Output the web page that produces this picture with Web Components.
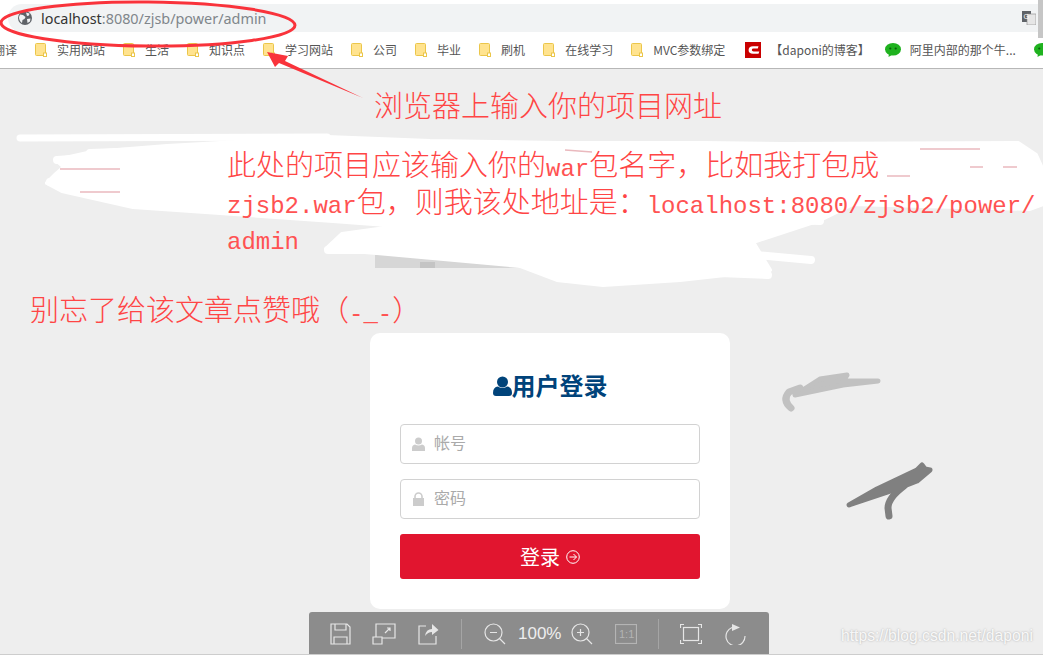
<!DOCTYPE html>
<html lang="zh">
<head>
<meta charset="utf-8">
<title>用户登录</title>
<style>
    html, body { margin: 0; height: 100%; overflow: hidden; background: #eeeeee; }
    body { font-family: "Noto Sans CJK SC", "Noto Sans", sans-serif; }
    body::after { content: ""; position: absolute; left: 0; top: 654px; width: 100%; height: 1px; background: #cdcdcd; }
</style>
</head>
<body>
<browser-bar url-host="localhost" url-rest=":8080/zjsb/power/admin">
    <book-mark kind="clip">翻译</book-mark>
    <book-mark>实用网站</book-mark>
    <book-mark>生活</book-mark>
    <book-mark>知识点</book-mark>
    <book-mark>学习网站</book-mark>
    <book-mark>公司</book-mark>
    <book-mark>毕业</book-mark>
    <book-mark>刷机</book-mark>
    <book-mark>在线学习</book-mark>
    <book-mark>MVC参数绑定</book-mark>
    <book-mark kind="csdn" style="margin-left:2px">【daponi的博客】</book-mark>
    <book-mark kind="wechat" style="margin-left:-3px">阿里内部的那个牛...</book-mark>
    <book-mark kind="wechat"></book-mark>
</browser-bar>
<login-page>
    <login-card heading="用户登录">
        <login-field icon="user">帐号</login-field>
        <login-field icon="lock">密码</login-field>
    </login-card>
</login-page>
<scribble-layer></scribble-layer>
<note-text style="left:374px;top:86px"><div>浏览器上输入你的项目网址</div></note-text>
<note-text style="left:227px;top:145px">
    <div>此处的项目应该输入你的<b>war</b>包名字，比如我打包成</div>
    <div><b>zjsb2.war</b>包，则我该处地址是：<b>localhost:8080/zjsb2/power/</b></div>
    <div><b>admin</b></div>
</note-text>
<note-text style="left:30px;top:290px"><div>别忘了给该文章点赞哦（<b>-_-</b>）</div></note-text>
<viewer-toolbar></viewer-toolbar>
<water-mark>https://blog.csdn.net/daponi</water-mark>

<script>
// bookmark bar icons, picked by the kind attribute
const BOOKMARK_ICONS = {
    folder: `<svg width="12" height="14" viewBox="0 0 12 14"><path d="M.5 1.500q0-1 1-1h8q1 0 1 1v11h-9q-1 0-1-1z" fill="#ffe38f" stroke="#ebc64a"/><rect x="8.500" y="10" width="3" height="3.500" fill="#fff" stroke="#ebc64a"/></svg>`,
    csdn: `<svg width="16" height="16" viewBox="0 0 16 16"><rect width="16" height="16" fill="#c90000"/><path d="M13.500 4.200H8Q3.600 4.200 3.600 8T8 11.800h5.500l.8-2.400H8.600Q6.800 9.400 6.800 8T8.600 6.600H12.800z" fill="#fff"/></svg>`,
    wechat: `<svg width="16" height="14" viewBox="0 0 16 14"><ellipse cx="8" cy="6.300" rx="8" ry="6.300" fill="#1fb21f"/><path d="M4 10l-.5 4 4-2.500z" fill="#1fb21f"/><circle cx="5.300" cy="5.500" r="1.100" fill="#0b5f0b"/><circle cx="10.700" cy="5.500" r="1.100" fill="#0b5f0b"/></svg>`
};

class BrowserBar extends HTMLElement {
    constructor() {
        super();
        this.attachShadow({ mode: 'open' });
    }

    connectedCallback() {
        this.shadowRoot.innerHTML = `
            <style>
                :host { display: block; height: 69px; box-sizing: border-box; background: #fff; border-bottom: 1px solid #b7b7b7; padding-top: 4px; overflow: hidden; }
                .address { display: flex; align-items: center; gap: 9px; height: 28px; margin-left: 8px; padding: 0 7px 0 10px; background: #f1f3f4; border-radius: 14px 0 0 14px; font: 14.400px "Noto Sans", sans-serif; color: #80868b; }
                .host { color: #333; }
                .url { flex: 1; white-space: nowrap; }
                .marks { display: flex; align-items: center; gap: 18px; height: 36px; margin-left: -7px; white-space: nowrap; }
            </style>
            <div class="address">
                <svg width="14" height="14" viewBox="0 0 14 14"><circle cx="7" cy="7" r="7" fill="#5f6368"/><path d="M2 3.500l3 .5 2.500 2-1 2-2 1-.5 3Q1 10 1 6zM8 1.500l3.500 1-.5 2-2 .5zM9 8l3.500-.5-.5 3-2.500 1.500z" fill="#f1f3f4"/></svg>
                <span class="url"><span class="host">${this.getAttribute('url-host')}</span>${this.getAttribute('url-rest')}</span>
                <svg width="14" height="14" viewBox="0 0 14 14"><rect width="9" height="11" fill="#5f6368"/><rect x="5" y="3" width="9" height="11" fill="#e6e6e6" stroke="#888" stroke-width=".6"/><text x="1.500" y="8" font-size="7" font-family="Liberation Sans" fill="#fff">G</text></svg>
            </div>
            <div class="marks"><slot></slot></div>
        `;
    }
}

class BookMark extends HTMLElement {
    constructor() {
        super();
        this.attachShadow({ mode: 'open' });
    }

    connectedCallback() {
        const kind = this.getAttribute('kind') || 'folder';
        const icon = BOOKMARK_ICONS[kind] || '';
        this.shadowRoot.innerHTML = `
            <style>
                :host { display: inline-flex; align-items: center; gap: ${kind === 'folder' ? 10 : 9}px; font: 12px "Noto Sans CJK SC", sans-serif; color: #555; flex: none; }
                svg { display: block; }
                span { margin-top: -2px; }
            </style>
            ${icon}<span><slot></slot></span>
        `;
    }
}

class LoginPage extends HTMLElement {
    constructor() {
        super();
        this.attachShadow({ mode: 'open' });
        this.shadowRoot.innerHTML = `
            <style>
                :host { display: block; padding: 264px 0 0 370px; }
            </style>
            <slot></slot>
        `;
    }
}

class LoginCard extends HTMLElement {
    constructor() {
        super();
        this.attachShadow({ mode: 'open' });
    }

    connectedCallback() {
        this.shadowRoot.innerHTML = `
            <style>
                :host { display: flex; flex-direction: column; width: 360px; height: 276px; box-sizing: border-box; padding: 37px 30px 0; background: #fff; border-radius: 10px; }
                h1 { display: flex; align-items: center; justify-content: center; margin: 0 0 23px; height: 31px; font: bold 24px/31px "Noto Sans CJK SC", sans-serif; color: #00437a; }
                h1 span { margin-top: -2px; }
                .fields { display: flex; flex-direction: column; gap: 15px; }
                button { display: flex; align-items: center; justify-content: center; gap: 6px; height: 45px; margin-top: 15px; border: 0; border-radius: 3px; background: #e1152f; color: #fff; font: 20px "Noto Sans CJK SC", sans-serif; }
            </style>
            <h1>
                <svg width="19" height="22" viewBox="0 0 19 22" fill="#00437a"><circle cx="9.500" cy="7" r="5.500"/><path d="M0 18q0-6 5-6.500 4.500 3 9 0 5 .5 5 6.500 0 3-3 3H3q-3 0-3-3z"/></svg>
                <span>${this.getAttribute('heading')}</span>
            </h1>
            <div class="fields"><slot></slot></div>
            <button type="button">
                <span>登录</span>
                <svg width="14" height="14" viewBox="0 0 14 14" fill="none" stroke="#fff"><circle cx="7" cy="7" r="6.300"/><path d="M3.500 7h7M7.500 4l3 3-3 3"/></svg>
            </button>
        `;
    }
}

class LoginField extends HTMLElement {
    constructor() {
        super();
        this.attachShadow({ mode: 'open' });
    }

    connectedCallback() {
        const icons = {
            user: `<svg width="13" height="14" viewBox="0 0 13 14" fill="#ccc"><circle cx="6.500" cy="4" r="3.500"/><path d="M0 11q0-3 3-3.500 3.500 2 7 0 3 .5 3 3.500v3H0z"/></svg>`,
            lock: `<svg width="13" height="14" viewBox="0 0 13 14"><path d="M3 6V4.500a3.500 3.500 0 0 1 7 0V6" fill="none" stroke="#ccc" stroke-width="1.600"/><rect x="1" y="6" width="11" height="8" fill="#ccc"/></svg>`
        };
        this.shadowRoot.innerHTML = `
            <style>
                :host { display: flex; align-items: center; gap: 9px; height: 40px; box-sizing: border-box; padding-left: 11px; border: 1px solid #d2d2d2; border-radius: 4px; background: #fff; color: #aaa; font: 16px "Noto Sans CJK SC", sans-serif; }
                svg { display: block; }
                span { margin-top: -4px; }
            </style>
            ${icons[this.getAttribute('icon')]}
            <span><slot></slot></span>
        `;
    }
}

// red notes typed over the screenshot, they sit on a free canvas
class NoteText extends HTMLElement {
    constructor() {
        super();
        this.attachShadow({ mode: 'open' });
        this.shadowRoot.innerHTML = `
            <style>
                :host { position: absolute; font: 29px/36.500px "Noto Sans CJK SC", serif; font-weight: 300; color: #ff4545; white-space: nowrap; }
                ::slotted(div) { height: 36.500px; }
            </style>
            <slot></slot>
        `;
    }
}

// hand drawn marks: the ellipse, the arrow and the white paint over the original page
class ScribbleLayer extends HTMLElement {
    constructor() {
        super();
        this.attachShadow({ mode: 'open' });
        this.shadowRoot.innerHTML = `
            <style>
                :host { position: absolute; left: 0; top: 0; width: 1043px; height: 655px; pointer-events: none; }
                svg { display: block; }
            </style>
            <svg width="1043" height="655" viewBox="0 0 1043 655">
                <rect x="1038" y="0" width="5" height="38" fill="#c6c6c6"/>
                <rect x="375" y="255" width="145" height="13" fill="#d6d6d6"/>
                <rect x="420" y="262" width="15" height="6" fill="#c4c4c4"/>
                <g stroke="#fff" stroke-linecap="round" stroke-linejoin="round" fill="#fff">
                    <path d="M20 138L327 137" stroke-width="7" fill="none"/>
                    <path d="M327 137L430 141 560 143 703 143 783 144 1018 143 1036 155 1041 166 1043 204 1030 209 853 204 820 220 753 242 770 270 680 280 603 285 557 280 520 266 377 253 326 249 342 234 400 226 333 221 133 207 62 191 47 183 56 174 64 167 56 160 92 152 167 146z" stroke-width="4"/>
                    <path d="M57 160L200 150M50 182L200 170M90 153L320 145M700 218L820 221M560 237L750 248M700 250L811 260M590 268L768 275M345 240L520 235M328 250L600 250" stroke-width="8" fill="none"/>
                </g>
                <g fill="none" stroke="#eab9be" stroke-width="1.500">
                    <path d="M60 169H120M80 192H120M565 150L592 152M887 176H910M920 149H980M970 167H983M1003 167H1017"/>
                </g>
                <g stroke-linecap="round" stroke-linejoin="round">
                    <path d="M795 395L820 379 847 375 843 381 878 381 843 385z" fill="#c1c1c1" stroke="#c1c1c1" stroke-width="5"/>
                    <path d="M791 408Q782 400 789 392L800 388" fill="none" stroke="#c1c1c1" stroke-width="7"/>
                    <path d="M849 505L877 489 917 470 922 465 925 469 930 470 917 481 894 490z" fill="#808080" stroke="#808080" stroke-width="5"/>
                    <path d="M904 486Q888 498 888 508L889 516" fill="none" stroke="#808080" stroke-width="7"/>
                </g>
                <ellipse cx="148" cy="24" rx="147" ry="22" transform="rotate(.5 148 24)" fill="none" stroke="#f9333b" stroke-width="3"/>
                <polygon points="267,52 288,56 285,61 363,98 279,63 275,67" fill="#f9333b"/>
            </svg>
        `;
    }
}

class ViewerToolbar extends HTMLElement {
    constructor() {
        super();
        this.attachShadow({ mode: 'open' });
        this.shadowRoot.innerHTML = `
            <style>
                :host { position: absolute; left: 309px; top: 612px; width: 460px; height: 43px; box-sizing: border-box; display: flex; align-items: center; padding: 0 0 0 21px; background: #8c8c8c; border-radius: 3px 3px 0 0; color: #eee; font: 17px "Liberation Sans", sans-serif; }
                svg { display: block; flex: none; fill: none; stroke: #e6e6e6; stroke-width: 1.200; }
                .sep { width: 1px; height: 30px; background: #a5a5a5; flex: none; }
                .zoom { width: 41px; margin: 0 12px; flex: none; white-space: nowrap; }
            </style>
            <svg style="margin-right:21px" width="21" height="22" viewBox="0 0 21 22"><path d="M1 1h16l3 3v17H1zM5 1v6h11V1M4 21v-7h13v7"/></svg>
            <svg style="margin-right:22px" width="24" height="22" viewBox="0 0 24 22"><path d="M4 14V1h19v14H10M1 14h9v7H1zM13 10l5-5M15 5h3v3"/></svg>
            <svg style="margin-right:22px" width="21" height="22" viewBox="0 0 21 22"><path d="M8 3H1v18h17v-8"/><path d="M7 13q1-7 7-7V1l6.500 6-6.500 5V9q-4 0-7 4z" fill="#e6e6e6" stroke="none"/></svg>
            <div class="sep" style="margin-right:22px"></div>
            <svg width="22" height="22" viewBox="0 0 22 22"><circle cx="9.500" cy="9.500" r="8.500"/><path d="M6 9.500h7M15.500 15.500L21 21" /></svg>
            <span class="zoom">100%</span>
            <svg style="margin-right:22px" width="22" height="22" viewBox="0 0 22 22"><circle cx="9.500" cy="9.500" r="8.500"/><path d="M6 9.500h7M9.500 6v7M15.500 15.500L21 21"/></svg>
            <svg style="margin-right:21px;stroke:#b4b4b4" width="22" height="20" viewBox="0 0 22 20"><rect x=".5" y=".5" width="21" height="19"/><text x="4" y="14" font-size="11" font-family="Liberation Sans" fill="#b4b4b4" stroke="none">1:1</text></svg>
            <div class="sep" style="margin-right:21px"></div>
            <svg style="margin-right:23px" width="22" height="20" viewBox="0 0 22 20"><rect x="3.500" y="3.500" width="15" height="13"/><path d="M.5 4V.5H4M18 .5h3.500V4M21.500 16v3.500H18M4 19.500H.5V16"/></svg>
            <svg width="21" height="22" viewBox="0 0 21 22"><path d="M7 4.500A9.500 9.500 0 1 0 20 13"/><path d="M7 1l8 3.500-8 3.500z" fill="#e6e6e6" stroke="none"/></svg>
        `;
    }
}

class WaterMark extends HTMLElement {
    constructor() {
        super();
        this.attachShadow({ mode: 'open' });
        this.shadowRoot.innerHTML = `
            <style>
                :host { position: absolute; left: 841px; top: 627px; font: 15.700px/18px "Liberation Sans", sans-serif; color: rgba(255,255,255,.9); text-shadow: 0 0 2px rgba(120,120,120,.6); white-space: nowrap; }
            </style>
            <slot></slot>
        `;
    }
}

customElements.define('browser-bar', BrowserBar);
customElements.define('book-mark', BookMark);
customElements.define('login-page', LoginPage);
customElements.define('login-card', LoginCard);
customElements.define('login-field', LoginField);
customElements.define('note-text', NoteText);
customElements.define('scribble-layer', ScribbleLayer);
customElements.define('viewer-toolbar', ViewerToolbar);
customElements.define('water-mark', WaterMark);
</script>
<style>
    note-text b { font: 24px/24px "Liberation Mono", monospace; color: #ff5252; }
</style>
</body>
</html>
